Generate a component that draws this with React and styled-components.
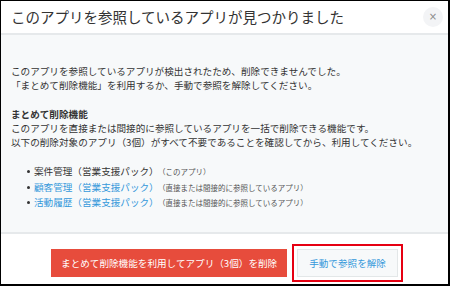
import React from 'react';
import styled, { createGlobalStyle } from 'styled-components';

const GlobalStyle = createGlobalStyle`
  html, body {
    margin: 0;
    padding: 0;
    background: #fff;
  }
  * {
    box-sizing: border-box;
  }
`;

const apps = [
  { name: '案件管理（営業支援パック）', note: '（このアプリ）', link: false },
  { name: '顧客管理（営業支援パック）', note: '（直接または間接的に参照しているアプリ）', link: true },
  { name: '活動履歴（営業支援パック）', note: '（直接または間接的に参照しているアプリ）', link: true },
];

export default function App() {
  return (
    <>
      <GlobalStyle />
      <Dialog>
        <Header>
          <Title>このアプリを参照しているアプリが見つかりました</Title>
          <CloseButton aria-label="close">×</CloseButton>
        </Header>
        <Body>
          <Paragraph>
            このアプリを参照しているアプリが検出されたため、削除できませんでした。
            <br />
            「まとめて削除機能」を利用するか、手動で参照を解除してください。
          </Paragraph>
          <Section>
            <Heading>まとめて削除機能</Heading>
            <Paragraph>
              このアプリを直接または間接的に参照しているアプリを一括で削除できる機能です。
              <br />
              以下の削除対象のアプリ（3個）がすべて不要であることを確認してから、利用してください。
            </Paragraph>
          </Section>
          <AppList>
            {apps.map((app) => (
              <AppItem key={app.name}>
                <AppName $link={app.link}>{app.name}</AppName>
                <Note>{app.note}</Note>
              </AppItem>
            ))}
          </AppList>
        </Body>
        <Footer>
          <DangerButton>まとめて削除機能を利用してアプリ（3個）を削除</DangerButton>
          <OutlineButton>手動で参照を解除</OutlineButton>
        </Footer>
      </Dialog>
    </>
  );
}

const Dialog = styled.div`
  width: 450px;
  height: 286px;
  display: flex;
  flex-direction: column;
  border: 1px solid #000;
  border-right-width: 2px;
  border-bottom-width: 2px;
  background: #fff;
  font-family: "Noto Sans CJK JP", "Noto Sans", sans-serif;
  color: #333;
  overflow: hidden;
`;

const Header = styled.div`
  height: 34px;
  flex: none;
  display: flex;
  align-items: center;
  justify-content: space-between;
  padding: 0 5px 0 10px;
  border-bottom: 2px solid #e6e9eb;
`;

const Title = styled.h1`
  margin: 0;
  font-size: 14.5px;
  font-weight: normal;
  line-height: 1;
  color: #333;
`;

const CloseButton = styled.button`
  width: 20px;
  height: 20px;
  padding: 0;
  border: none;
  border-radius: 50%;
  background: #f3f4f6;
  color: #8a8a8a;
  font-size: 10px;
  line-height: 20px;
  font-family: "DejaVu Sans", sans-serif;
  cursor: pointer;
`;

const Body = styled.div`
  flex: 1;
  background: #f7f9fa;
  padding: 29px 10px 0 10px;
  border-bottom: 2px solid #e6e9eb;
  font-size: 9.6px;
  line-height: 14px;
`;

const Paragraph = styled.p`
  margin: 0;
`;

const Section = styled.div`
  margin-top: 15px;
`;

const Heading = styled.div`
  font-weight: bold;
`;

const AppList = styled.ul`
  list-style: none;
  margin: 15px 0 0 0;
  padding: 0 0 0 23px;
`;

const AppItem = styled.li`
  position: relative;
  line-height: 14.5px;

  &::before {
    content: '';
    position: absolute;
    left: -7px;
    top: 6px;
    width: 3px;
    height: 3px;
    border-radius: 50%;
    background: #333;
  }
`;

const AppName = styled.span`
  color: ${(p) => (p.$link ? '#3498db' : '#333')};
`;

const Note = styled.span`
  font-size: 7.5px;
  color: #555;
  margin-left: 3px;
`;

const Footer = styled.div`
  height: 50px;
  flex: none;
  display: flex;
  justify-content: center;
  align-items: flex-start;
  gap: 10px;
  padding-top: 15px;
`;

const DangerButton = styled.button`
  height: 28px;
  padding: 0 10px;
  border: none;
  background: #e74c3c;
  color: #fff;
  font-family: inherit;
  font-size: 9.6px;
  cursor: pointer;
`;

const OutlineButton = styled.button`
  height: 28px;
  padding: 0 11px;
  border: 1px solid #e3e7e8;
  background: #f7f9fa;
  color: #3498db;
  font-family: inherit;
  font-size: 9.6px;
  cursor: pointer;
  outline: 2px solid #e60012;
  outline-offset: 3px;
`;
